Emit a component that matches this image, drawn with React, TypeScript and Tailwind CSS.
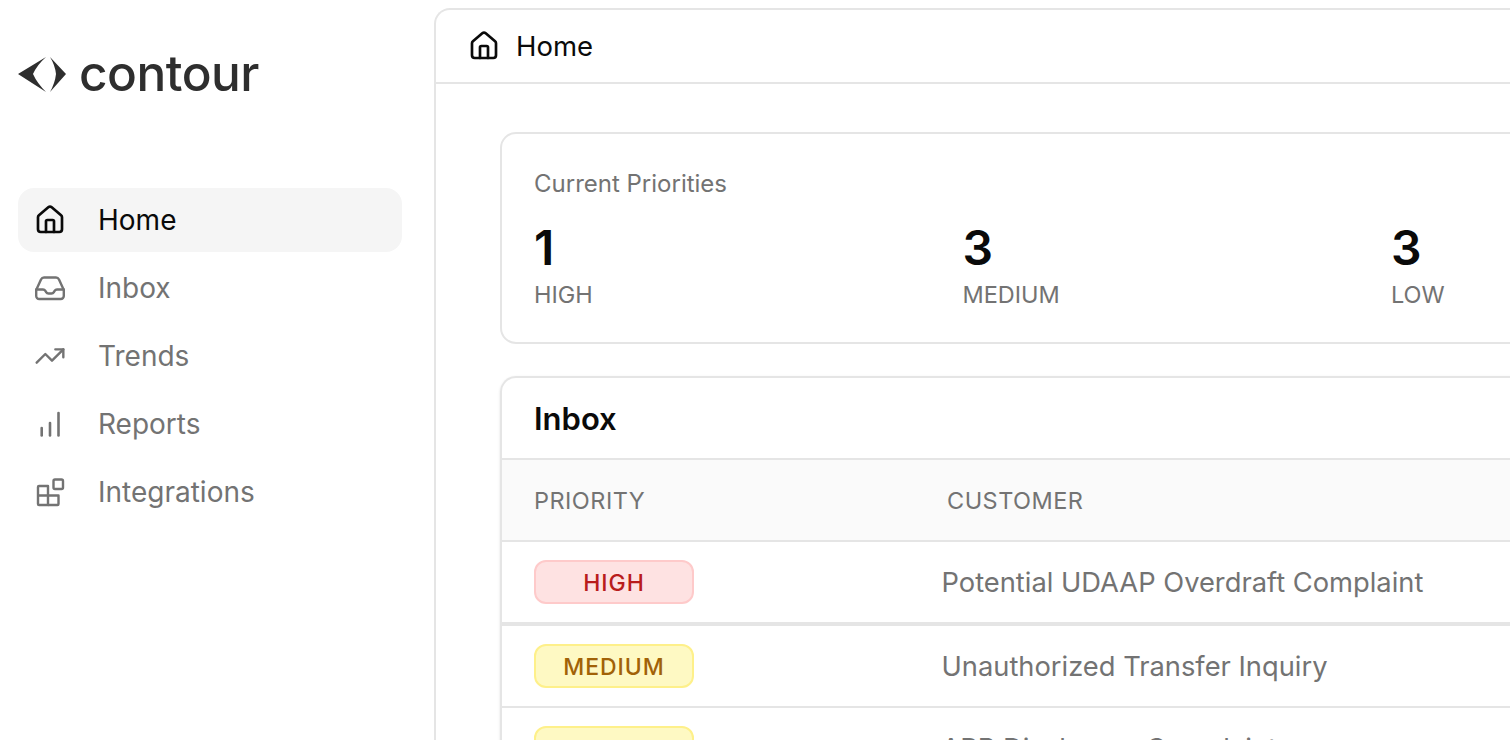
import { House, TrendingUp } from "lucide-react";

const fontStack = "font-['Inter','Liberation_Sans',sans-serif]";

function InboxIcon() {
  return (
    <svg width="32" height="32" viewBox="0 0 32 32" fill="none" stroke="currentColor" strokeWidth="2.4" strokeLinejoin="round" strokeLinecap="round">
      <path d="M2.200 18 7 7.500Q8 5.500 10 5.500H22Q24 5.500 25 7.500L29.800 18V24a3 3 0 0 1-3 3H5.200a3 3 0 0 1-3-3Z" />
      <path d="M2.200 17.500H9Q10.500 17.500 11.500 19L12 20Q13 21.500 14.500 21.500H17.500Q19 21.500 20 20L20.500 19Q21.500 17.500 23 17.500H29.800" />
    </svg>
  );
}

function ReportsIcon() {
  return (
    <svg width="32" height="32" viewBox="0 0 32 32" fill="none" stroke="currentColor" strokeWidth="2.600" strokeLinecap="round">
      <path d="M7.700 27.500V20" />
      <path d="M16 27.500V15" />
      <path d="M24.500 27.500V5" />
    </svg>
  );
}

function IntegrationsIcon() {
  return (
    <svg width="32" height="32" viewBox="0 0 32 32" fill="none" stroke="currentColor" strokeWidth="2.400" strokeLinejoin="round">
      <path d="M4 11a1 1 0 0 1 1-1H14V29H5a1 1 0 0 1-1-1Z" />
      <path d="M4 19.500H24.500V28a1 1 0 0 1-1 1H14" />
      <rect x="19.500" y="3.500" width="9.500" height="9.500" rx="1.500" />
    </svg>
  );
}

const navItems = [
  { label: "Inbox", icon: <InboxIcon /> },
  { label: "Trends", icon: <TrendingUp size={32} strokeWidth={1.8} /> },
  { label: "Reports", icon: <ReportsIcon /> },
  { label: "Integrations", icon: <IntegrationsIcon /> },
];

const priorities = [
  { count: 1, label: "HIGH" },
  { count: 3, label: "MEDIUM" },
  { count: 3, label: "LOW" },
];

const rows = [
  { priority: "HIGH", subject: "Potential UDAAP Overdraft Complaint", tone: "border-[#fecaca] bg-[#fee2e2] text-[#b91c1c]", line: "border-b-4" },
  { priority: "MEDIUM", subject: "Unauthorized Transfer Inquiry", tone: "border-[#fef08a] bg-[#fef9c3] text-[#a16207]", line: "border-b-2" },
  { priority: "MEDIUM", subject: "APR Disclosure Complaint", tone: "border-[#fef08a] bg-[#fef9c3] text-[#a16207]", line: "border-b-2" },
];

export default function App() {
  return (
    <div className={`flex h-[740px] w-[1510px] overflow-hidden bg-white ${fontStack}`}>
      <aside className="flex w-[434px] shrink-0 flex-col px-[18px]">
        <div className="flex h-[188px] items-start pt-[46px] text-[#2e2e2e]">
          <svg width="50" height="36" viewBox="0 0 50 36" className="mt-[11px]" fill="currentColor">
            <path d="M0 17 28 0Q19 8 15 17 19 26 28 35Z" />
            <path d="M32 0 48 17 32 35Q37 26 38 17 37 8 32 0Z" />
          </svg>
          <span className="ml-[11px] text-[49.500px] leading-[54px] font-medium tracking-[-0.01em]">contour</span>
        </div>
        <nav className="flex w-[384px] flex-col gap-1">
          <a className="flex h-16 items-center rounded-2xl bg-[#f5f5f5] pl-4 text-[28px] text-[#0a0a0a]">
            <span className="flex w-16 shrink-0"><House size={32} strokeWidth={2} /></span>
            Home
          </a>
          {navItems.map((item) => (
            <a key={item.label} className="flex h-16 items-center rounded-2xl pl-4 text-[28px] text-[#737373]">
              <span className="flex w-16 shrink-0">{item.icon}</span>
              {item.label}
            </a>
          ))}
        </nav>
      </aside>

      <main className="mt-[8px] w-[1500px] shrink-0 rounded-tl-2xl border-t-2 border-l-2 border-[#e5e5e5]">
        <header className="flex h-[74px] items-center border-b-2 border-[#e5e5e5] pl-[32px] text-[27.500px] text-[#0a0a0a]">
          <House size={32} strokeWidth={2} />
          <span className="mt-px ml-[16px]">Home</span>
        </header>

        <div className="flex flex-col gap-[32px] pt-[48px] pl-[64px]">
          <section className="h-[212px] rounded-2xl border-2 border-[#e5e5e5] px-[32px] pt-[34px]">
            <p className="text-[24px] leading-[32px] text-[#737373]">Current Priorities</p>
            <div className="mt-[17px] grid grid-cols-[428.500px_428.500px_428.500px]">
              {priorities.map((item) => (
                <div key={item.label}>
                  <p className="text-[48px] leading-[62px] font-semibold text-[#0a0a0a]">{item.count}</p>
                  <p className="text-[23.500px] leading-[32px] text-[#737373]">{item.label}</p>
                </div>
              ))}
            </div>
          </section>

          <section className="rounded-t-2xl border-t-2 border-l-2 border-[#e5e5e5] shadow-sm">
            <h2 className="flex h-[82px] items-center border-b-2 border-[#e5e5e5] pt-[2px] pl-[32px] text-[31px] font-semibold text-[#0a0a0a]">Inbox</h2>
            <div className="flex h-[82px] items-center border-b-2 border-[#e5e5e5] bg-[#fafafa] pt-[2px] pl-[32px] text-[23.500px] tracking-[0.02em] text-[#737373]">
              <span className="w-[413px]">PRIORITY</span>
              <span>CUSTOMER</span>
            </div>
            {rows.map((row, index) => (
              <div key={index} className={`flex items-center border-[#e5e5e5] pl-[32px] ${row.line} ${index === 0 ? "h-[84px]" : "h-[82px]"}`}>
                <div className="w-[407.500px]">
                  <span className={`flex h-[44px] w-[160px] items-center justify-center rounded-xl border-2 pt-[2px] text-[23px] font-medium tracking-[0.04em] ${row.tone}`}>
                    {row.priority}
                  </span>
                </div>
                <span className="mt-[2px] text-[27.300px] text-[#737373]">{row.subject}</span>
              </div>
            ))}
          </section>
        </div>
      </main>
    </div>
  );
}
